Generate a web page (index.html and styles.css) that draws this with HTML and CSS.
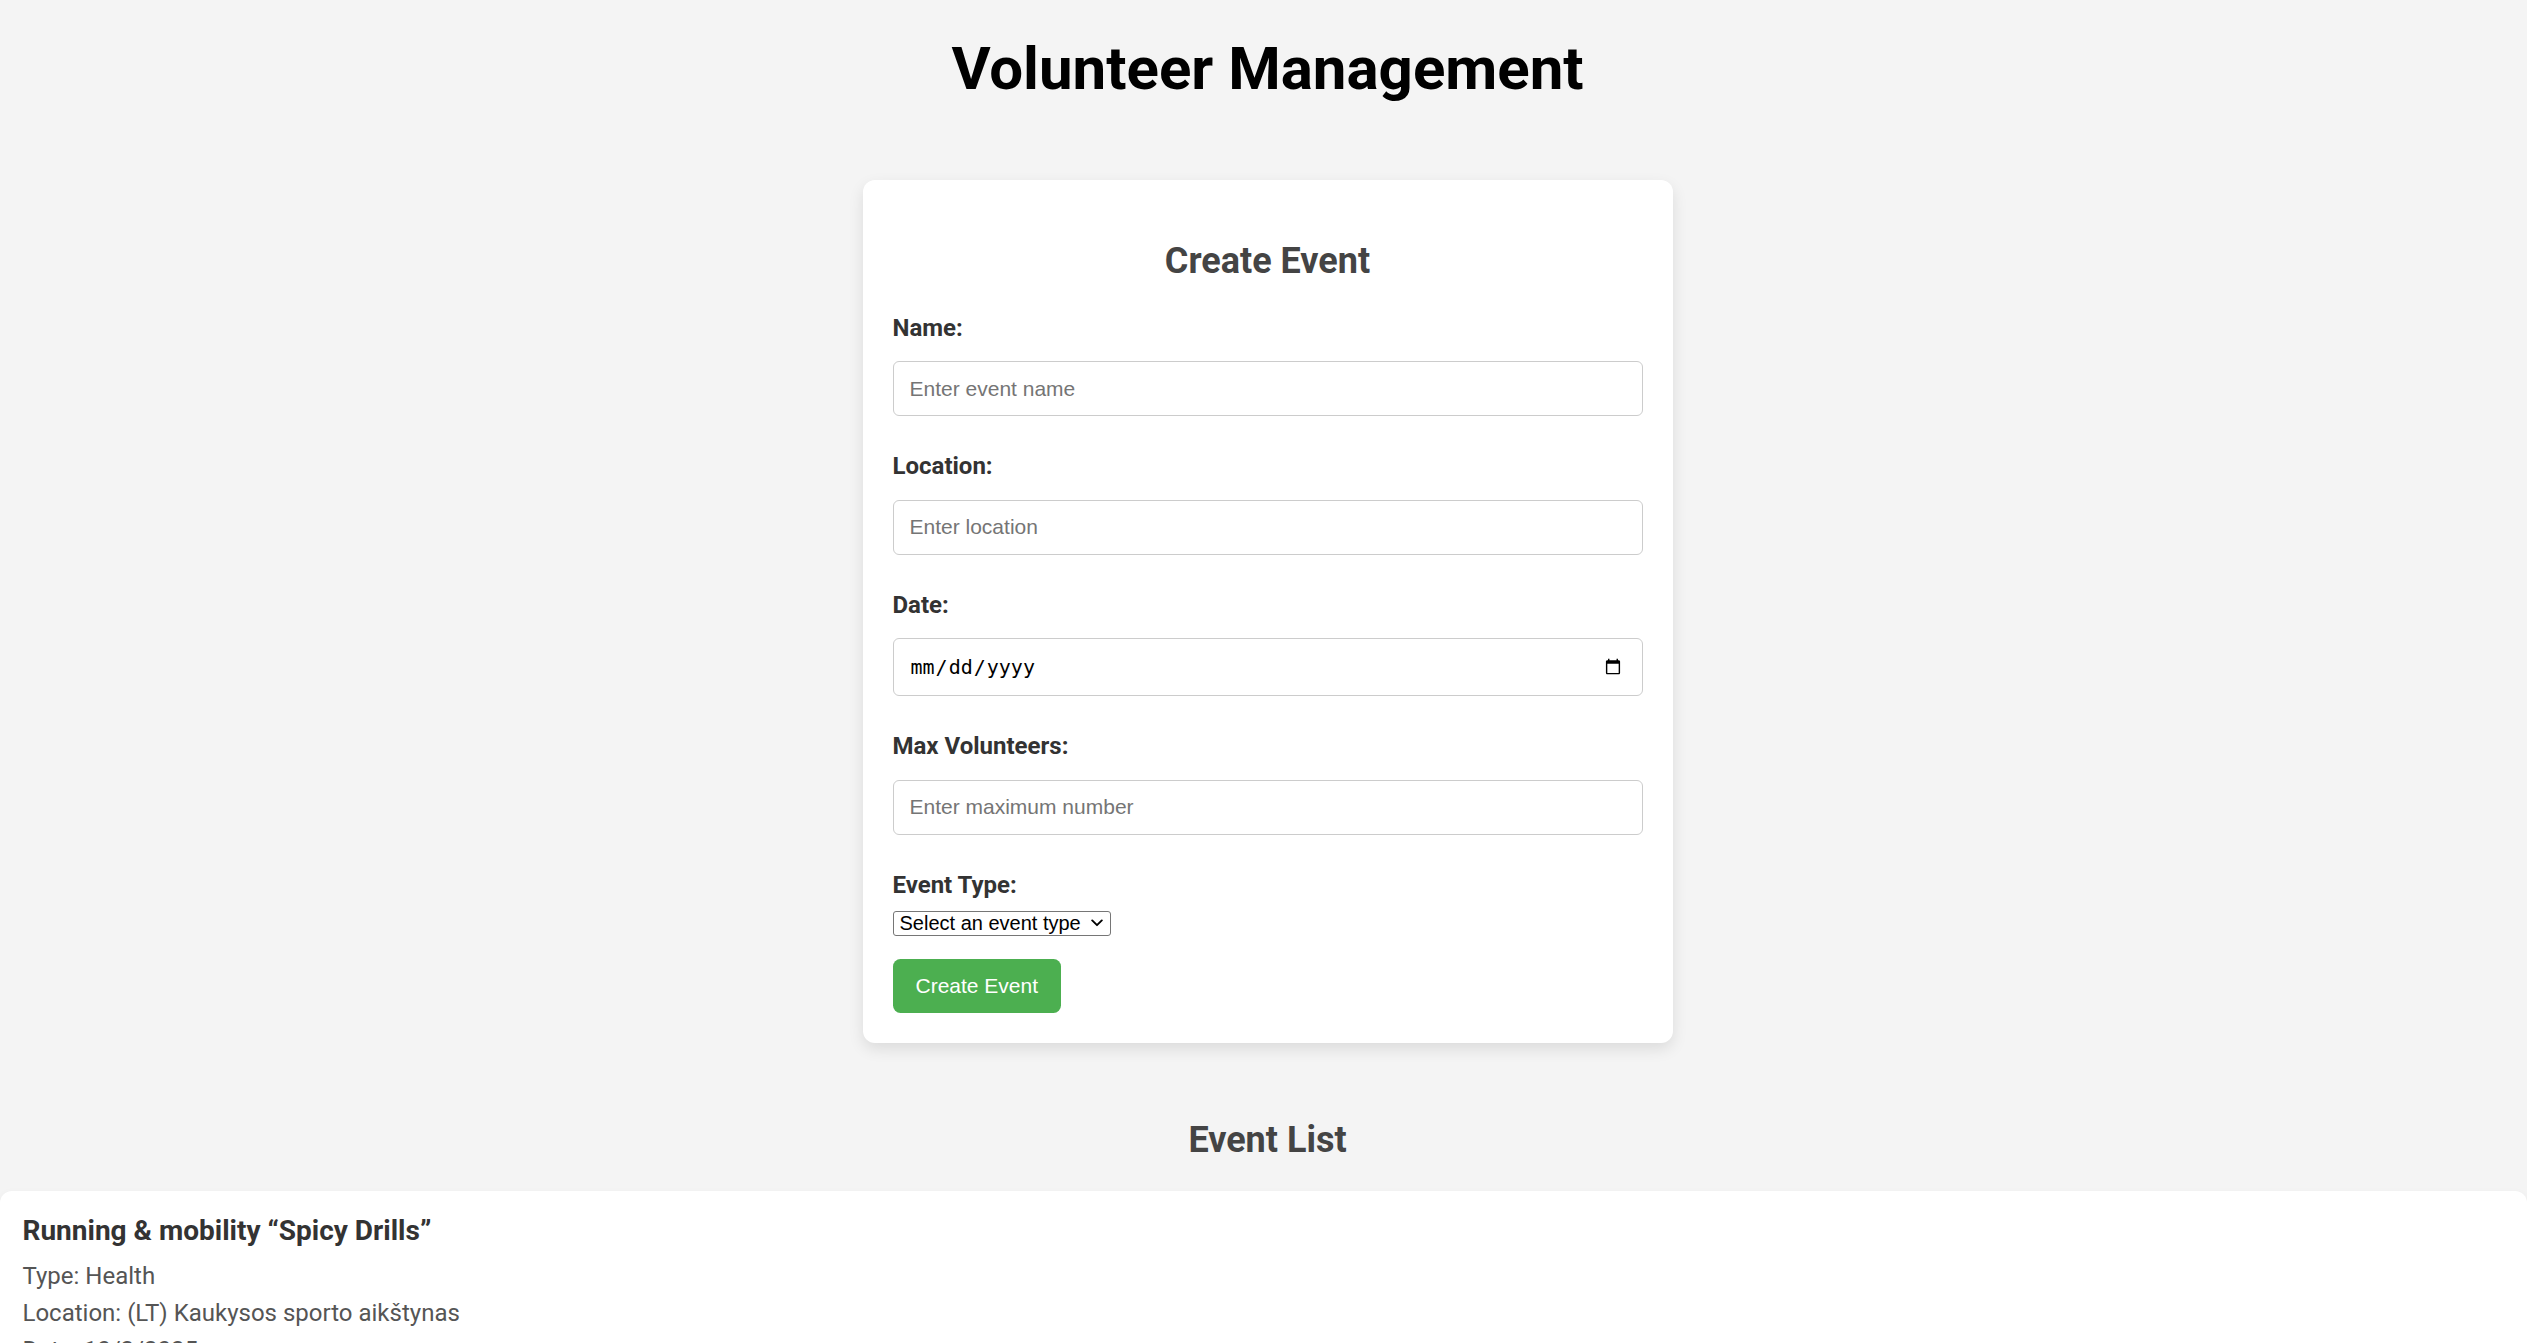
FILE: index.html
```html
<!DOCTYPE html>
<html lang="en">
<head>
<meta charset="UTF-8">
<title>Volunteer Management</title>
<link rel="stylesheet" href="styles.css">
</head>
<body>
  <div class="center-col">
    <h1 class="page-title">Volunteer Management</h1>

    <form class="form-card">
      <h2 class="section-title">Create Event</h2>

      <label class="field-label" for="name">Name:</label>
      <input class="text-input" id="name" type="text" placeholder="Enter event name">

      <label class="field-label" for="location">Location:</label>
      <input class="text-input" id="location" type="text" placeholder="Enter location">

      <label class="field-label" for="date">Date:</label>
      <input class="text-input date-input" id="date" type="date">

      <label class="field-label" for="max">Max Volunteers:</label>
      <input class="text-input" id="max" type="number" placeholder="Enter maximum number">

      <label class="field-label label-tight" for="type">Event Type:</label>
      <div class="select-wrap">
        <select class="type-select" id="type">
          <option>Select an event type</option>
          <option>Health</option>
          <option>Education</option>
          <option>Environment</option>
        </select>
        <svg class="select-chevron" width="12" height="8" viewBox="0 0 12 8" aria-hidden="true">
          <path d="M1.2 1.4 L6 6.2 L10.8 1.4" fill="none" stroke="#000" stroke-width="1.9" stroke-linecap="round" stroke-linejoin="round"/>
        </svg>
      </div>

      <button class="submit-btn" type="button">Create Event</button>
    </form>

    <h2 class="section-title list-title">Event List</h2>
  </div>

  <div class="event-list">
    <div class="event-card">
      <h3 class="event-name">Running &amp; mobility “Spicy Drills”</h3>
      <p class="event-line">Type: Health</p>
      <p class="event-line">Location: (LT) Kaukysos sporto aikštynas</p>
      <p class="event-line">Date: 10/2/2025</p>
      <p class="event-line">Max Volunteers: 10</p>
    </div>
  </div>
</body>
</html>
```

FILE: styles.css
```css
html, body {
  margin: 0;
  padding: 0;
}

body {
  background: #f4f4f4;
  font-family: Roboto, "Liberation Sans", Arial, sans-serif;
  color: #333;
}

.center-col {
  padding-left: 8px;
}

.page-title {
  margin: 33px 0 76px;
  font-size: 60px;
  font-weight: 700;
  line-height: normal;
  text-align: center;
  color: #000;
}

.form-card {
  box-sizing: border-box;
  width: 810px;
  margin: 0 auto;
  padding: 30px;
  background: #fff;
  border-radius: 12px;
  box-shadow: 0 6px 15px rgba(0, 0, 0, 0.1);
}

.section-title {
  margin: 30px 0 31.5px;
  font-size: 36px;
  font-weight: 700;
  line-height: normal;
  text-align: center;
  color: #444;
}

.field-label {
  display: block;
  margin: 0 0 19.5px;
  font-size: 24px;
  font-weight: 700;
  line-height: normal;
  color: #333;
}

.label-tight {
  margin-bottom: 12px;
}

.text-input {
  display: block;
  box-sizing: border-box;
  width: 100%;
  height: 55px;
  margin: 0 0 36px;
  padding: 0 16px;
  border: 1px solid #ccc;
  border-radius: 6px;
  background: #fff;
  font-family: "Liberation Sans", Arial, sans-serif;
  font-size: 21px;
  color: #000;
  outline: none;
}

.text-input::placeholder {
  color: #757575;
}

.date-input {
  height: 58px;
  font-family: "DejaVu Sans Mono", monospace;
  font-size: 20px;
}

.date-input::-webkit-calendar-picker-indicator {
  width: 18px;
  height: 18px;
  padding: 0;
  margin-right: 4px;
}

.select-wrap {
  position: relative;
  display: block;
  width: max-content;
  margin: 0 0 23.5px;
}

.type-select {
  display: block;
  box-sizing: border-box;
  height: 25px;
  margin: 0;
  padding: 0 28px 0 6px;
  border: 1px solid #767676;
  border-radius: 3px;
  background: #fff;
  font-family: "Liberation Sans", Arial, sans-serif;
  font-size: 20px;
  color: #000;
  -webkit-appearance: none;
  appearance: none;
}

.select-chevron {
  position: absolute;
  right: 8px;
  top: 8px;
  pointer-events: none;
}

.submit-btn {
  display: block;
  box-sizing: border-box;
  height: 54px;
  padding: 0 23px;
  border: none;
  border-radius: 7.5px;
  background: #4caf50;
  color: #fff;
  font-family: "Liberation Sans", Arial, sans-serif;
  font-size: 21px;
  cursor: pointer;
}

.list-title {
  margin: 76px 0 30px;
}

.event-list {
  display: flex;
  flex-direction: column;
}

.event-card {
  padding: 22.5px;
  background: #fff;
  border-radius: 12px;
  box-shadow: 0 3px 8px rgba(0, 0, 0, 0.05);
}

.event-name {
  margin: 0 0 15px;
  font-size: 28px;
  font-weight: 700;
  line-height: normal;
  color: #333;
}

.event-line {
  margin: 9px 0;
  font-size: 24px;
  line-height: normal;
  color: #555;
}
```
